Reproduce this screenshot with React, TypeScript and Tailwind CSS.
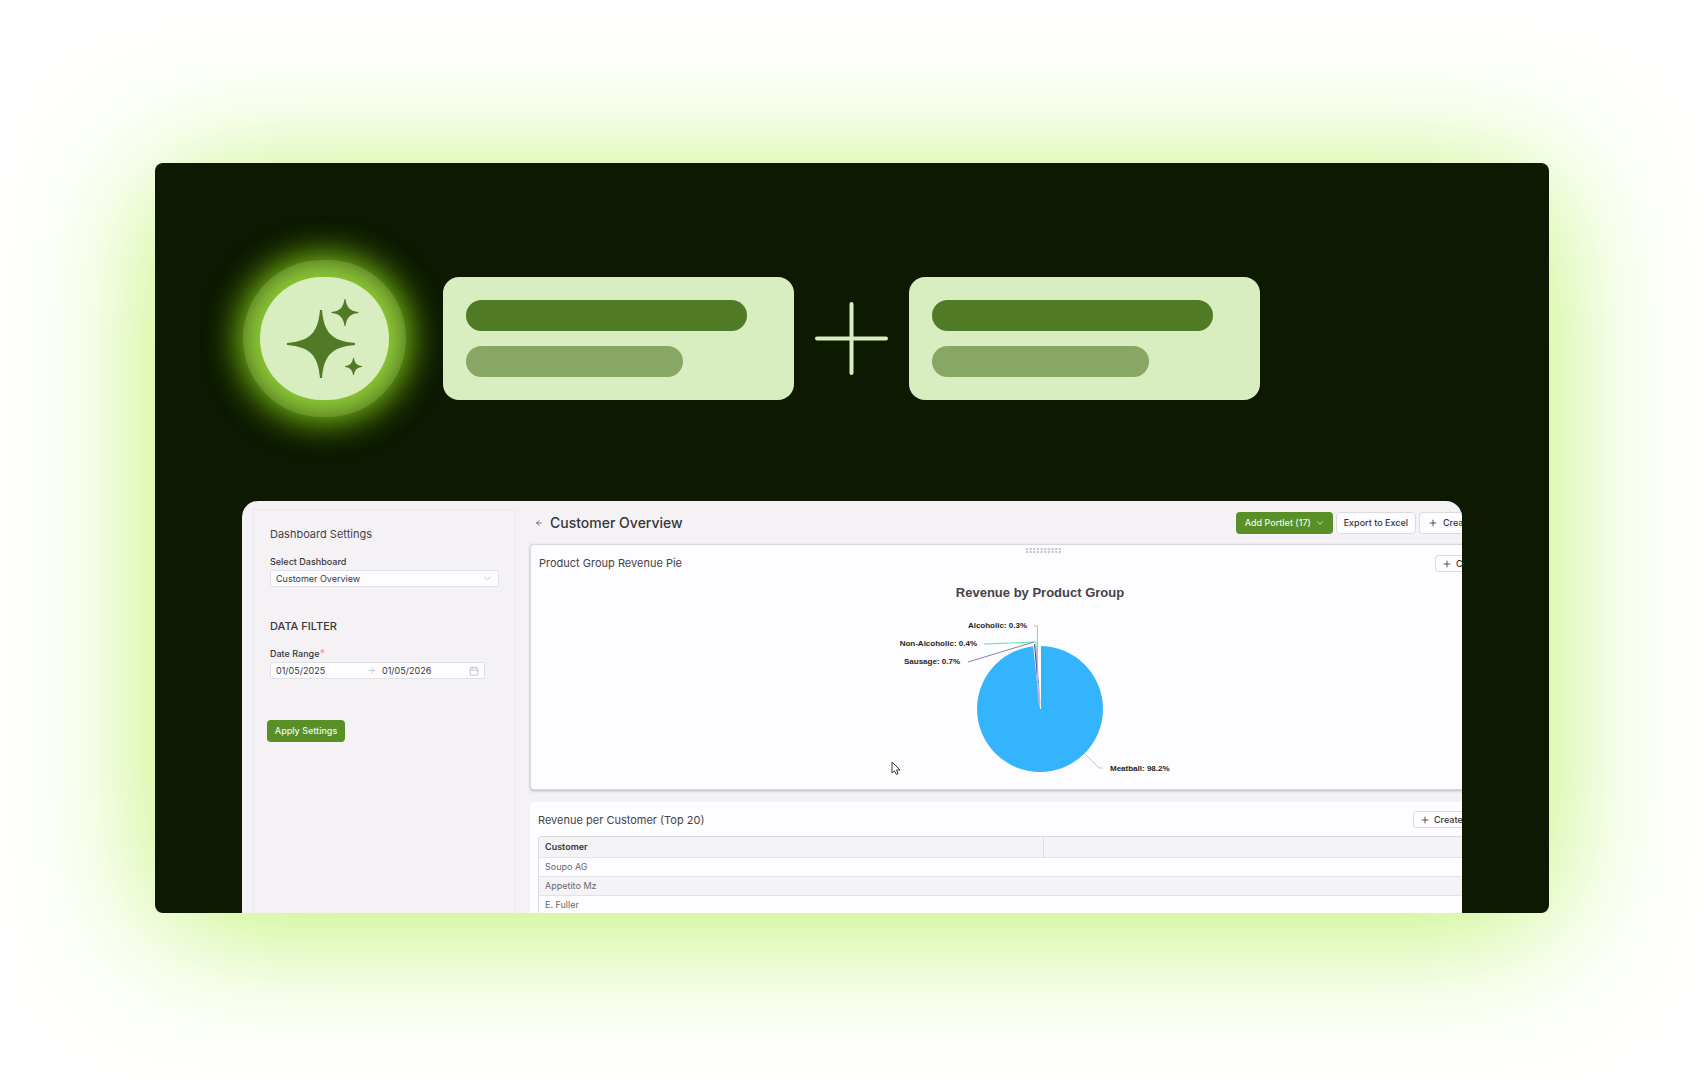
import { ArrowLeft, ArrowRight, Calendar, ChevronDown, Plus } from 'lucide-react';

const customers = ['Soupo AG', 'Appetito Mz', 'E. Fuller'];

function PromptCard() {
  return (
    <div className="w-[351px] h-[123px] shrink-0 rounded-2xl bg-[#d8edc0] p-[23px] flex flex-col gap-[15px]">
      <div className="w-[281px] h-[31px] rounded-full bg-[#517a26]" />
      <div className="w-[217px] h-[31px] rounded-full bg-[#88a765]" />
    </div>
  );
}

function SparkleBadge() {
  return (
    <div className="w-[129px] h-[123px] shrink-0 rounded-full bg-[#d8edc0] shadow-[0_0_0_17px_rgba(217,238,193,0.18),0_0_34px_19px_#84cc16,0_0_50px_12px_rgba(132,204,22,0.3)]">
      <svg viewBox="0 0 129 123" className="w-full h-full" fill="#517a26">
        <path d="M60 33h2c2 22 9 31 33 33v2c-24 2-31 11-33 33h-2c-2-22-9-31-33-33v-2c24-2 31-11 33-33z" />
        <path d="M84.500 22h1c1 8 4 12 13 13v1c-9 1-12 5-13 13h-1c-1-8-4-12-13-13v-1c9-1 12-5 13-13z" />
        <path d="M93 81h1c.5 5 3 7.500 8 8v1c-5 .5-7.500 3-8 8h-1c-.5-5-3-7.500-8-8v-1c5-.5 7.500-3 8-8z" />
      </svg>
    </div>
  );
}

function Sidebar() {
  return (
    <aside className="w-[263px] shrink-0 mt-2 ml-[11px] px-4 pt-4 border border-b-0 border-[#ebe9ee] text-[#38363b]">
      <h2 className="text-[11px] leading-4 text-[#454349]">Dashboard Settings</h2>
      <label htmlFor="dashboard" className="block mt-[14px] text-[9px] leading-3 font-medium">Select Dashboard</label>
      <div className="relative mt-[2px]">
        <select id="dashboard" className="block w-full h-[17px] appearance-none rounded-[2px] border border-[#e2e0e5] bg-[#fdfcfe] px-[5px] text-[9px] leading-[15px]">
          <option>Customer Overview</option>
        </select>
        <ChevronDown className="absolute right-[6px] top-[3px] w-[11px] h-[11px] text-[#bbb] pointer-events-none" strokeWidth={2} />
      </div>

      <h3 className="mt-[31px] text-[11px] leading-4 font-medium">DATA FILTER</h3>
      <label htmlFor="from" className="block mt-[14px] text-[9px] leading-3 font-medium">
        Date Range<span className="text-[11px] leading-none text-[#f59aa5] align-top">*</span>
      </label>
      <div className="mt-[2px] w-[215px] h-[17px] flex items-center rounded-[2px] border border-[#e2e0e5] bg-[#fdfcfe] px-[5px] text-[9px]">
        <input id="from" defaultValue="01/05/2025" className="w-[91px] outline-none" />
        <ArrowRight className="w-[9px] h-[9px] text-[#bbb]" />
        <input aria-label="To" defaultValue="01/05/2026" className="ml-[6px] w-[87px] min-w-0 outline-none" />
        <Calendar className="w-[10px] h-[10px] text-[#bbb] shrink-0" />
      </div>
      <button className="mt-[41px] -ml-[3px] h-[22px] w-[78px] rounded-[4px] bg-[#588f26] text-[9px] font-medium text-[#f1f6ea]">Apply Settings</button>
    </aside>
  );
}

function DragHandle() {
  return (
    <svg viewBox="0 0 35 5" className="w-[35px] h-[5px]" stroke="#c4c2c6" strokeWidth="2" strokeDasharray="2 1.650">
      <path d="M0 1h35M0 4h35" />
    </svg>
  );
}

function RevenuePie() {
  return (
    <svg viewBox="0 0 320 200" className="w-[320px] h-[200px] shrink-0 font-['Liberation_Sans',sans-serif] font-bold" fill="#1f1f22">
      <text x="160" y="19" textAnchor="middle" fontSize="13" fill="#444347">Revenue by Product Group</text>
      <circle cx="160" cy="131" r="63" fill="#34b4fd" />
      <path d="M160 131L153 67h8v64z" fill="#fdfcfe" />
      <path d="M159.500 126L155.500 68" stroke="#bcb0da" strokeWidth="2" fill="none" />
      <path d="M158 105L154.500 66" stroke="#4f4fa0" fill="none" />
      <path d="M154 48h3.500v65" stroke="#f5a58c" fill="none" />
      <path d="M104 66l52-2v8" stroke="#66e0ab" fill="none" />
      <path d="M88 84l66-20" stroke="#8a80b8" fill="none" />
      <path d="M205 176l14 14h4" stroke="#9bd3e6" fill="none" />
      <g fontSize="8">
        <text x="147" y="50" textAnchor="end">Alcoholic: 0.3%</text>
        <text x="97" y="68" textAnchor="end">Non-Alcoholic: 0.4%</text>
        <text x="80" y="86" textAnchor="end">Sausage: 0.7%</text>
        <text x="230" y="193">Meatball: 98.2%</text>
      </g>
    </svg>
  );
}

function Cursor() {
  return (
    <svg viewBox="0 0 10 14" className="absolute left-[360px] top-[216px] w-[10px] h-[14px]" fill="#fff" stroke="#3a3a3a" strokeLinejoin="round">
      <path d="M1 1v11l2.500-2.200L5.300 13.400l1.800-.8L5.500 9H9z" />
    </svg>
  );
}

function CreateButton() {
  return (
    <button className="h-[17px] shrink-0 flex items-center gap-1 rounded-[3px] border border-[#dddbe0] bg-[#fdfcfe] px-[6px] text-[9px] font-medium">
      <Plus className="w-[10px] h-[10px]" />
      Create
    </button>
  );
}

export default function App() {
  return (
    <div className="min-h-screen bg-white overflow-hidden px-[155px] pt-[163px] pb-[167px] font-[Inter,sans-serif]">
      <main className="rounded-lg bg-[#0d1900] px-[87px] pt-[114px] shadow-[0_14px_144px_-4px_#b9f161]">
        <div className="flex items-center pl-[18px]">
          <SparkleBadge />
          <div className="w-[54px] shrink-0" />
          <PromptCard />
          <svg viewBox="0 0 73 73" className="mx-[21px] w-[73px] h-[73px] shrink-0" stroke="#d8edc0" strokeWidth="4" strokeLinecap="round">
            <path d="M36.500 2v69M2 36.500h69" />
          </svg>
          <PromptCard />
        </div>

        <section className="mt-[101px] h-[412px] overflow-hidden rounded-t-2xl bg-[#f4f2f5] flex text-[#38363b]">
          <Sidebar />
          <div className="flex-1 min-w-0 ml-[14px]">
            <header className="h-[43px] flex items-center">
              <ArrowLeft className="ml-[5px] w-2 h-2" />
              <h1 className="ml-[7px] text-[14px] font-medium">Customer Overview</h1>
              <button className="ml-auto w-[97px] h-[22px] flex items-center gap-1 rounded-[4px] bg-[#588f26] pl-[9px] text-[9px] font-medium text-[#f1f6ea]">
                Add Portlet (17)
                <ChevronDown className="w-[10px] h-[10px]" />
              </button>
              <button className="ml-[3px] h-[22px] rounded-[4px] border border-[#dddbe0] bg-[#fdfcfe] px-[7px] text-[9px] font-medium">Export to Excel</button>
              <button className="ml-[3px] w-[43px] h-[22px] overflow-hidden whitespace-nowrap flex items-center gap-[5px] rounded-l-[4px] border border-r-0 border-[#dddbe0] bg-[#fdfcfe] pl-2 text-[9px] font-medium">
                <Plus className="w-[10px] h-[10px] shrink-0" />
                Create
              </button>
            </header>

            <article className="relative h-[246px] rounded-l-[4px] border border-r-0 border-[#d9d7dc] bg-[#fdfcfe] shadow-[0_1px_3px_rgba(0,0,0,0.25)]">
              <div className="flex justify-center pl-[94px] pt-[3px]">
                <DragHandle />
              </div>
              <div className="flex justify-between pt-[2px] pl-2">
                <h2 className="text-[11px] leading-4 text-[#454349]">Product Group Revenue Pie</h2>
                <div className="w-[27px] overflow-hidden"><CreateButton /></div>
              </div>
              <div className="flex justify-center pl-[86px] mt-[6px]">
                <RevenuePie />
              </div>
              <Cursor />
            </article>

            <article className="mt-3 rounded-tl-[4px] bg-[#fdfcfe] pl-2 pt-[9px]">
              <div className="flex items-center justify-between">
                <h2 className="text-[11px] leading-4 text-[#454349]">Revenue per Customer (Top 20)</h2>
                <div className="w-[49px] overflow-hidden"><CreateButton /></div>
              </div>
              <div className="mt-2 rounded-tl-[4px] border-t border-l border-[#dddbe0] overflow-hidden">
                <table className="w-full table-fixed text-left text-[9px]">
                  <thead>
                    <tr className="h-5 bg-[#f4f3f5]">
                      <th className="w-[504px] pl-[6px] font-semibold">Customer</th>
                      <th className="border-l border-[#dddbe0]" />
                    </tr>
                  </thead>
                  <tbody>
                    {customers.map((name) => (
                      <tr key={name} className="h-[19px] border-t border-[#e4e2e6] even:bg-[#f4f3f5] text-[#6b696e]">
                        <td className="pl-[6px]">{name}</td>
                        <td />
                      </tr>
                    ))}
                  </tbody>
                </table>
              </div>
            </article>
          </div>
        </section>
      </main>
    </div>
  );
}
